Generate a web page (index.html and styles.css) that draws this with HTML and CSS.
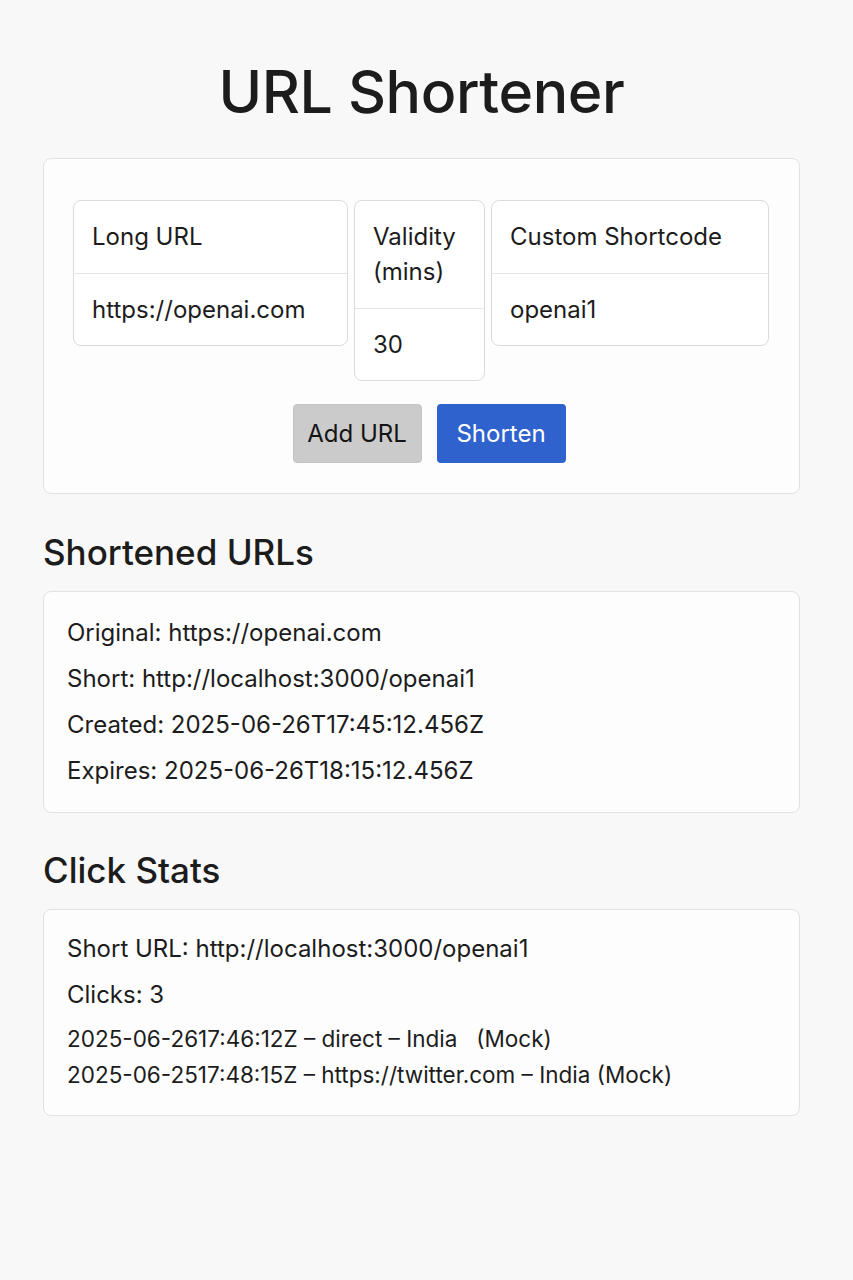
FILE: index.html
```html
<!DOCTYPE html>
<html lang="en">
<head>
<meta charset="utf-8">
<title>URL Shortener</title>
<link rel="stylesheet" href="styles.css">
</head>
<body>
<main class="page">
  <h1 class="title">URL Shortener</h1>

  <section class="card form-card">
    <div class="fields">
      <div class="field">
        <div class="cell head">Long URL</div>
        <div class="cell">https://openai.com</div>
      </div>
      <div class="field">
        <div class="cell head">Validity<br>(mins)</div>
        <div class="cell">30</div>
      </div>
      <div class="field">
        <div class="cell head">Custom Shortcode</div>
        <div class="cell">openai1</div>
      </div>
    </div>
    <div class="actions">
      <button class="btn btn-grey">Add URL</button>
      <button class="btn btn-blue">Shorten</button>
    </div>
  </section>

  <h2 class="section-title">Shortened URLs</h2>
  <section class="card list-card">
    <p class="line">Original: https://openai.com</p>
    <p class="line">Short: http://localhost:3000/openai1</p>
    <p class="line">Created: 2025-06-26T17:45:12.456Z</p>
    <p class="line">Expires: 2025-06-26T18:15:12.456Z</p>
  </section>

  <h2 class="section-title section-title-tight">Click Stats</h2>
  <section class="card stats-card">
    <p class="line">Short URL: http://localhost:3000/openai1</p>
    <p class="line">Clicks: 3</p>
    <ul class="log">
      <li>2025-06-2617:46:12Z – direct – India &nbsp; (Mock)</li>
      <li>2025-06-2517:48:15Z – https://twitter.com – India (Mock)</li>
    </ul>
  </section>
</main>
</body>
</html>
```

FILE: styles.css
```css
* { box-sizing: border-box; }

html, body {
  margin: 0;
  padding: 0;
  background: #f8f8f8;
}

body {
  font-family: Inter, "Liberation Sans", sans-serif;
  color: #1c1c1c;
}

.page {
  width: 757px;
  margin-left: 43px;
  padding-top: 53px;
  padding-bottom: 40px;
}

.title {
  margin: 0 0 27px;
  text-align: center;
  font-size: 59px;
  font-weight: 500;
  letter-spacing: -0.4px;
  line-height: 78px;
}

.card {
  background: #fdfdfd;
  border: 1px solid #e2e2e2;
  border-radius: 8px;
}

.form-card {
  padding: 41px 30px 30px 29px;
}

.fields {
  display: grid;
  grid-template-columns: 275px 131px 1fr;
  gap: 6px;
  align-items: start;
}

.field {
  background: #fff;
  border: 1px solid #dcdcdc;
  border-radius: 8px;
}

.cell {
  padding: 18px 18px 18.5px;
  font-size: 24px;
  line-height: 35px;
}

.cell.head {
  border-bottom: 1px solid #e6e6e6;
}

.actions {
  display: flex;
  justify-content: center;
  gap: 15px;
  margin-top: 23px;
  padding-left: 16px;
}

.btn {
  width: 129px;
  height: 59px;
  border: 1px solid transparent;
  border-radius: 4px;
  font-family: inherit;
  font-size: 24px;
  padding: 0;
}

.btn-grey {
  background: #cbcbcb;
  border-color: #c4c4c4;
  color: #141414;
}

.btn-blue {
  background: #2f62cd;
  color: #fff;
}

.section-title {
  margin: 38px 0 19px;
  font-size: 35px;
  font-weight: 500;
  line-height: 40px;
}

.section-title-tight {
  margin-top: 37px;
}

.list-card {
  padding: 18px 23px 18px;
}

.stats-card {
  padding: 16px 23px 22px;
}

.line {
  margin: 0;
  font-size: 24px;
  line-height: 46px;
}

.log {
  list-style: none;
  margin: 3px 0 0;
  padding: 0;
}

.log li {
  font-size: 22.5px;
  line-height: 36px;
}
```
